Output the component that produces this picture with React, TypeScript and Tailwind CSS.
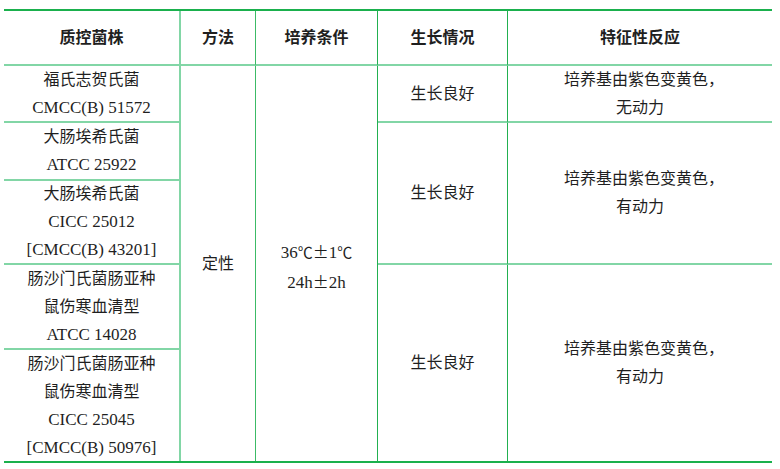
import React from 'react';

const font = "font-['Liberation_Serif','Noto_Sans_CJK_SC',serif]";

// light inner rules and darker column rules, as in the source table
const hLine = 'border-b-2 border-[#82d6a6]';
const cell = 'flex flex-col items-center justify-center text-center leading-[28px]';
const cjk = "font-['Noto_Sans_CJK_SC'] text-[15px]";

const Lines: React.FC<{ lines: string[] }> = ({ lines }) => (
  <>
    {lines.map((l, i) => (
      // latin-only lines run a touch larger in the source
      <span key={i} className={`whitespace-nowrap ${/^[\x20-\x7e]+$/.test(l) ? 'text-[17px]' : ''}`}>
        {l}
      </span>
    ))}
  </>
);

export default function App() {
  return (
    <div className={`bg-white w-[780px] h-[469px] pt-[9px] pl-[4px] ${font} text-[16px] text-[#1f1f1f] [font-feature-settings:'halt']`}>
      <div className="w-[768px] border-t-2 border-b-2 border-[#1ab04d] grid grid-cols-[177px_75px_122px_130px_264px] grid-rows-[55px_57px_58px_84px_85px_111px]">
        {/* header */}
        <div className={`${cell} ${hLine} border-r-2 border-r-[#82d6a6] font-bold`}>质控菌株</div>
        <div className={`${cell} ${hLine} border-r border-r-[#3cbb66] font-bold`}>方法</div>
        <div className={`${cell} ${hLine} border-r border-r-[#22b050] font-bold`}>培养条件</div>
        <div className={`${cell} ${hLine} border-r border-r-[#22b050] font-bold`}>生长情况</div>
        <div className={`${cell} ${hLine} font-bold`}>特征性反应</div>

        {/* strain column */}
        <div className={`${cell} ${hLine} border-r-2 border-r-[#82d6a6] col-start-1 row-start-2`}>
          <Lines lines={['福氏志贺氏菌', 'CMCC(B) 51572']} />
        </div>
        <div className={`${cell} ${hLine} border-r-2 border-r-[#82d6a6] col-start-1 row-start-3`}>
          <Lines lines={['大肠埃希氏菌', 'ATCC 25922']} />
        </div>
        <div className={`${cell} ${hLine} border-r-2 border-r-[#82d6a6] col-start-1 row-start-4`}>
          <Lines lines={['大肠埃希氏菌', 'CICC 25012', '[CMCC(B) 43201]']} />
        </div>
        <div className={`${cell} ${hLine} border-r-2 border-r-[#82d6a6] col-start-1 row-start-5`}>
          <Lines lines={['肠沙门氏菌肠亚种', '鼠伤寒血清型', 'ATCC 14028']} />
        </div>
        <div className={`${cell} border-r-2 border-r-[#82d6a6] col-start-1 row-start-6`}>
          <Lines lines={['肠沙门氏菌肠亚种', '鼠伤寒血清型', 'CICC 25045', '[CMCC(B) 50976]']} />
        </div>

        {/* method and condition */}
        <div className={`${cell} border-r border-r-[#3cbb66] col-start-2 row-start-2 row-span-5`}>定性</div>
        <div className={`${cell} border-r border-r-[#22b050] col-start-3 row-start-2 row-span-5 pt-[6px] text-[17px]`}>
          <span className="whitespace-nowrap">
            36<span className={cjk}>℃</span>
            <span className="font-['Noto_Sans_CJK_SC'] text-[16px]">±</span>1<span className={cjk}>℃</span>
          </span>
          <span className="whitespace-nowrap">
            24h<span className="font-['Noto_Sans_CJK_SC'] text-[16px]">±</span>2h
          </span>
        </div>

        {/* growth */}
        <div className={`${cell} ${hLine} border-r border-r-[#22b050] col-start-4 row-start-2`}>生长良好</div>
        <div className={`${cell} ${hLine} border-r border-r-[#22b050] col-start-4 row-start-3 row-span-2`}>生长良好</div>
        <div className={`${cell} border-r border-r-[#22b050] col-start-4 row-start-5 row-span-2`}>生长良好</div>

        {/* reaction */}
        <div className={`${cell} ${hLine} col-start-5 row-start-2`}>
          <Lines lines={['培养基由紫色变黄色，', '无动力']} />
        </div>
        <div className={`${cell} ${hLine} col-start-5 row-start-3 row-span-2`}>
          <Lines lines={['培养基由紫色变黄色，', '有动力']} />
        </div>
        <div className={`${cell} col-start-5 row-start-5 row-span-2`}>
          <Lines lines={['培养基由紫色变黄色，', '有动力']} />
        </div>
      </div>
    </div>
  );
}
